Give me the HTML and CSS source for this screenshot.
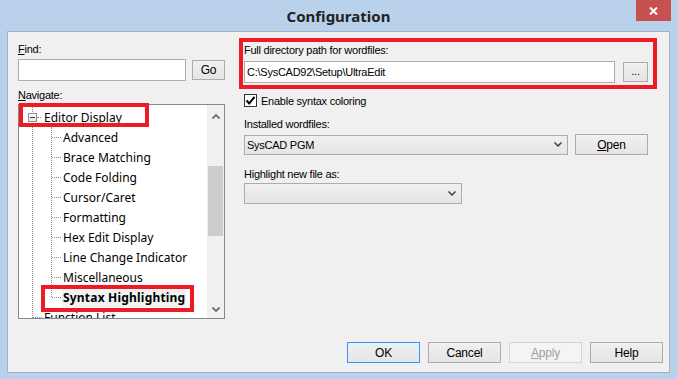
FILE: index.html
```html
<!DOCTYPE html>
<html>
	<head>
		<meta charset="utf-8">
		<title>Configuration</title>
		<link rel="stylesheet" href="styles.css">
	</head>
	<body>
		<div class="window">
			<div class="titlebar">
				<span class="title">Configuration</span>
				<span class="close">
					<svg width="9" height="8" viewBox="0 0 9 8"><path d="M1 0.5 L8 7.5 M8 0.5 L1 7.5" stroke="#fff" stroke-width="2"/></svg>
				</span>
			</div>
			<div class="client">
				<div class="panes">
					<div class="left">
						<div class="label"><u>F</u>ind:</div>
						<div class="find-row">
							<div class="textbox find-box"></div>
							<div class="btn go">Go</div>
						</div>
						<div class="label nav-label"><u>N</u>avigate:</div>
						<div class="tree">
							<div class="tree-list">
								<div class="node root"><span class="expander"></span><span class="stub"></span><span>Editor Display</span></div>
								<div class="children">
									<div class="node child"><span class="stub"></span><span>Advanced</span></div>
									<div class="node child"><span class="stub"></span><span>Brace Matching</span></div>
									<div class="node child"><span class="stub"></span><span>Code Folding</span></div>
									<div class="node child"><span class="stub"></span><span>Cursor/Caret</span></div>
									<div class="node child"><span class="stub"></span><span>Formatting</span></div>
									<div class="node child"><span class="stub"></span><span>Hex Edit Display</span></div>
									<div class="node child"><span class="stub"></span><span>Line Change Indicator</span></div>
									<div class="node child"><span class="stub"></span><span>Miscellaneous</span></div>
									<div class="node child selected"><span class="stub"></span><span class="sel">Syntax Highlighting</span></div>
								</div>
								<div class="node root leaf"><span class="stub"></span><span>Function List</span></div>
							</div>
							<div class="scrollbar">
								<div class="arrow up">
									<svg width="8" height="5" viewBox="0 0 8 5"><path d="M0.5 4.5 L4 1 L7.5 4.5" fill="none" stroke="#606060" stroke-width="1.6"/></svg>
								</div>
								<div class="track"><div class="thumb"></div></div>
								<div class="arrow down">
									<svg width="8" height="5" viewBox="0 0 8 5"><path d="M0.5 0.5 L4 4 L7.5 0.5" fill="none" stroke="#606060" stroke-width="1.6"/></svg>
								</div>
							</div>
							<span class="mark mark-editor"></span>
							<span class="mark mark-syntax"></span>
						</div>
					</div>
					<div class="right">
						<div class="path-group">
							<div class="label">Full directory path for wordfiles:</div>
							<div class="path-row">
								<div class="textbox path-box">C:\SysCAD92\Setup\UltraEdit</div>
								<div class="btn browse">...</div>
							</div>
						</div>
						<div class="check-row">
							<span class="checkbox">
								<svg width="11" height="11" viewBox="0 0 11 11"><path d="M1.5 5.5 L4.2 8.5 L9.5 1.8" fill="none" stroke="#000" stroke-width="2"/></svg>
							</span>
							<span>Enable syntax coloring</span>
						</div>
						<div class="label indent installed">Installed wordfiles:</div>
						<div class="combo-row indent">
							<div class="combo wide">
								<span>SysCAD PGM</span>
								<svg width="8" height="5" viewBox="0 0 8 5"><path d="M0.5 0.5 L4 4 L7.5 0.5" fill="none" stroke="#404040" stroke-width="1.5"/></svg>
							</div>
							<div class="btn open"><u>O</u>pen</div>
						</div>
						<div class="label indent highlight">Highlight new file as:</div>
						<div class="combo narrow indent">
							<span></span>
							<svg width="8" height="5" viewBox="0 0 8 5"><path d="M0.5 0.5 L4 4 L7.5 0.5" fill="none" stroke="#404040" stroke-width="1.5"/></svg>
						</div>
					</div>
				</div>
				<div class="buttons">
					<div class="btn default">OK</div>
					<div class="btn">Cancel</div>
					<div class="btn disabled"><u>A</u>pply</div>
					<div class="btn">Help</div>
				</div>
			</div>
		</div>
	</body>
</html>
```

FILE: styles.css
```css
body{
	margin: 0;
	padding: 0;
}
.window{
	width: 678px;
	height: 379px;
	box-sizing: border-box;
	padding: 0 8px 6px 7px;
	background: #b9d1ea;
	display: flex;
	flex-direction: column;
	font-family: "Liberation Sans", Arial, sans-serif;
	font-size: 11px;
	letter-spacing: -0.25px;
	color: #000;
}
.titlebar{
	height: 31px;
	display: grid;
	grid-template-columns: 1fr auto 1fr;
}
.title{
	grid-column: 2;
	font-family: "Noto Sans", sans-serif;
	font-weight: bold;
	font-size: 15px;
	letter-spacing: 0;
	color: #222;
	line-height: 31px;
	padding-top: 1px;
}
.close{
	grid-column: 3;
	justify-self: end;
	align-self: start;
	margin-right: -1px;
	width: 35px;
	height: 21px;
	background: #c75050;
	display: flex;
	align-items: center;
	justify-content: center;
}
.client{
	flex: 1;
	border: 1px solid #9fb3c8;
	background: #f0f0f0;
	display: flex;
	flex-direction: column;
}
.panes{
	display: flex;
	align-items: flex-start;
	padding: 6px 0 0 10px;
}
.left{
	width: 207px;
	padding-top: 5px;
	display: flex;
	flex-direction: column;
}
.label{
	height: 13px;
	line-height: 13px;
	white-space: nowrap;
}
.find-row{
	margin-top: 3px;
	height: 22px;
	display: flex;
	align-items: center;
	justify-content: space-between;
}
.textbox{
	box-sizing: border-box;
	height: 22px;
	border: 1px solid #abadb3;
	background: #fff;
	padding: 0 2px;
	line-height: 20px;
	white-space: nowrap;
}
.find-box{
	width: 168px;
}
.btn{
	box-sizing: border-box;
	width: 73px;
	height: 21px;
	border: 1px solid #acacac;
	background: linear-gradient(#f0f0f0, #e5e5e5);
	display: flex;
	align-items: center;
	justify-content: center;
	font-size: 12px;
	letter-spacing: -0.2px;
}
.go{
	width: 33px;
	height: 20px;
}
.nav-label{
	margin-top: 8px;
	margin-bottom: 2px;
}
.tree{
	position: relative;
	box-sizing: border-box;
	width: 207px;
	height: 215px;
	border: 1px solid #828790;
	background: #fff;
	display: flex;
}
.tree-list{
	flex: 1;
	position: relative;
	overflow: hidden;
	padding-top: 2px;
	font-family: "Noto Sans", sans-serif;
	font-size: 12px;
	letter-spacing: 0;
}
.tree-list::before{
	content: "";
	position: absolute;
	left: 13px;
	top: 0;
	bottom: 0;
	border-left: 1px dotted #8c8c8c;
}
.node{
	height: 20px;
	display: flex;
	align-items: center;
	white-space: nowrap;
	position: relative;
}
.stub{
	height: 0;
	border-top: 1px dotted #8c8c8c;
}
.root .stub{
	width: 4px;
	margin-right: 3px;
}
.leaf{
	padding-left: 14px;
}
.leaf .stub{
	width: 9px;
	margin-right: 2px;
}
.expander{
	box-sizing: border-box;
	width: 9px;
	height: 9px;
	margin-left: 9px;
	border: 1px solid #919191;
	background: linear-gradient(#fff, #e4e4e4);
	position: relative;
	z-index: 1;
}
.expander::after{
	content: "";
	position: absolute;
	left: 1px;
	top: 3px;
	width: 5px;
	height: 1px;
	background: #3c3c3c;
}
.children{
	position: relative;
}
.children::before{
	content: "";
	position: absolute;
	left: 32px;
	top: 0;
	bottom: 10px;
	border-left: 1px dotted #8c8c8c;
}
.child{
	padding-left: 33px;
}
.child .stub{
	width: 9px;
	margin-right: 2px;
}
.sel{
	font-weight: bold;
	letter-spacing: 0.2px;
	background: #f2f2f2;
	padding: 1px 1px;
	margin-left: -1px;
}
.scrollbar{
	width: 17px;
	background: #f0f0f0;
	display: flex;
	flex-direction: column;
}
.arrow{
	display: flex;
	align-items: center;
	justify-content: center;
}
.arrow.up{
	height: 22px;
}
.arrow.down{
	height: 17px;
}
.track{
	flex: 1;
}
.thumb{
	margin: 39px 1px 0 1px;
	height: 70px;
	background: #cdcdcd;
}
.mark{
	position: absolute;
	box-sizing: border-box;
	border: 4px solid #ed1c24;
}
.mark-editor{
	left: 0;
	top: -2px;
	width: 130px;
	height: 24px;
}
.mark-syntax{
	left: 22px;
	top: 180px;
	width: 153px;
	height: 27px;
}
.right{
	margin-left: 14px;
	width: 418px;
	display: flex;
	flex-direction: column;
}
.path-group{
	box-sizing: border-box;
	height: 51px;
	border: 4px solid #ed1c24;
	padding: 2px 5px 2px 1px;
}
.path-row{
	margin-top: 4px;
	display: flex;
	align-items: center;
	justify-content: space-between;
}
.path-box{
	width: 371px;
}
.browse{
	width: 25px;
	height: 20px;
	font-size: 11px;
	padding-bottom: 2px;
}
.check-row{
	margin: 4px 0 0 5px;
	height: 13px;
	display: flex;
	align-items: center;
	gap: 4px;
	padding-top: 1px;
}
.checkbox{
	box-sizing: border-box;
	width: 13px;
	height: 13px;
	border: 1px solid #333;
	background: #fff;
	display: flex;
	align-items: center;
	justify-content: center;
}
.indent{
	margin-left: 5px;
}
.installed{
	margin-top: 11px;
}
.combo-row{
	margin-top: 3px;
	display: flex;
	align-items: center;
	gap: 7px;
}
.combo{
	box-sizing: border-box;
	height: 20px;
	border: 1px solid #acacac;
	background: linear-gradient(#f0f0f0, #e5e5e5);
	display: flex;
	align-items: center;
	justify-content: space-between;
	padding: 0 5px 0 2px;
	white-space: nowrap;
}
.combo.wide{
	width: 324px;
}
.combo.narrow{
	width: 218px;
	height: 21px;
	margin-top: 2px;
}
.highlight{
	margin-top: 13px;
}
.buttons{
	margin-top: auto;
	display: flex;
	justify-content: flex-end;
	gap: 8px;
	padding: 0 6px 9px 0;
}
.default{
	border-color: #3399ff;
}
.disabled{
	color: #a0a0a0;
	border-color: #d5d5d5;
	background: #f4f4f4;
}
```
